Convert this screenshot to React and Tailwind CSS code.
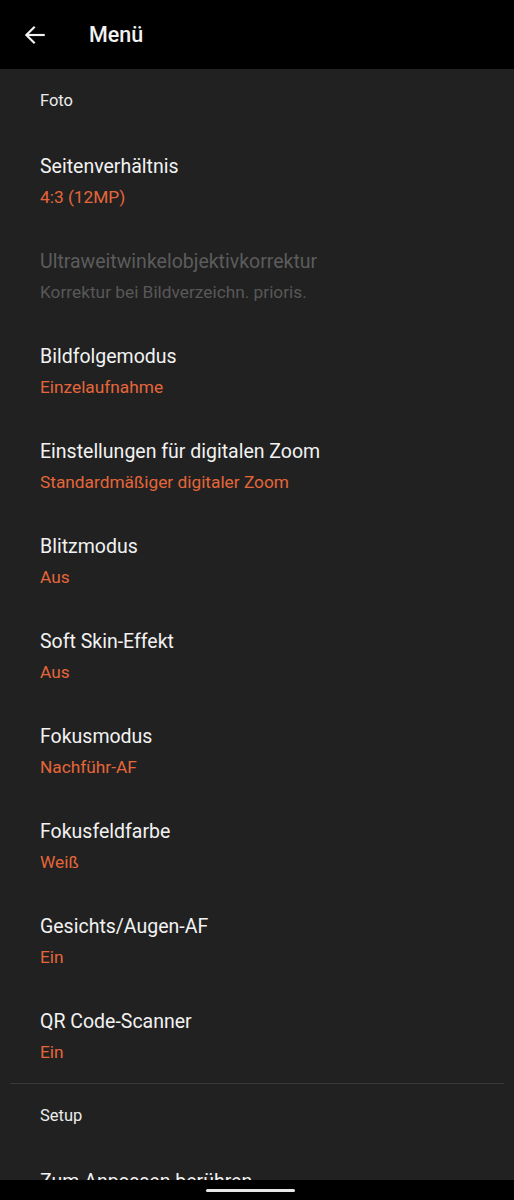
import React from 'react';

const photoItems = [
  { title: 'Seitenverhältnis', value: '4:3 (12MP)' },
  { title: 'Ultraweitwinkelobjektivkorrektur', value: 'Korrektur bei Bildverzeichn. prioris.', disabled: true },
  { title: 'Bildfolgemodus', value: 'Einzelaufnahme' },
  { title: 'Einstellungen für digitalen Zoom', value: 'Standardmäßiger digitaler Zoom' },
  { title: 'Blitzmodus', value: 'Aus' },
  { title: 'Soft Skin-Effekt', value: 'Aus' },
  { title: 'Fokusmodus', value: 'Nachführ-AF' },
  { title: 'Fokusfeldfarbe', value: 'Weiß' },
  { title: 'Gesichts/Augen-AF', value: 'Ein' },
  { title: 'QR Code-Scanner', value: 'Ein' },
];

function SectionLabel({ children }) {
  return (
    <div className="h-[64px] flex items-center pl-10 pt-px text-[16.5px] text-[#ececec]">
      {children}
    </div>
  );
}

function Row({ title, value, disabled }) {
  return (
    <div className="h-[95px] pl-10 pt-[22px]">
      <div className={`text-[19.5px] leading-[24px] ${disabled ? 'text-[#5c5c5c]' : 'text-[#f2f2f2]'}`}>
        {title}
      </div>
      {value && (
        <div className={`mt-[7px] text-[17.3px] leading-[22px] ${disabled ? 'text-[#585858]' : 'text-[#e5663a]'}`}>
          {value}
        </div>
      )}
    </div>
  );
}

export default function App() {
  return (
    <div
      className="w-[514px] h-[1200px] flex flex-col bg-[#212121] overflow-hidden"
      style={{ fontFamily: 'Roboto, "Noto Sans", sans-serif' }}
    >
      {/* Top bar */}
      <div className="h-[69px] shrink-0 bg-black flex items-center">
        <svg className="ml-[22px] mt-px" width="26" height="26" viewBox="0 0 24 24" fill="none" stroke="#f2f2f2" strokeWidth="2" strokeLinecap="square">
          <path d="M20 12H5" />
          <path d="M11 5l-7 7 7 7" />
        </svg>
        <span className="ml-[41px] mt-px text-[21.5px] font-medium text-[#f2f2f2]">Menü</span>
      </div>

      {/* List */}
      <div className="flex-1 overflow-hidden">
        <SectionLabel>Foto</SectionLabel>
        {photoItems.map((item) => (
          <Row key={item.title} {...item} />
        ))}
        <div className="mx-[10px] h-px bg-[#3a3a3a]" />
        <SectionLabel>Setup</SectionLabel>
        <Row title="Zum Anpassen berühren" />
      </div>

      {/* Gesture bar */}
      <div className="h-[20px] shrink-0 bg-black pt-[9px]">
        <div className="ml-[206px] w-[89px] h-[3px] rounded-full bg-[#e8e8e8]" />
      </div>
    </div>
  );
}
